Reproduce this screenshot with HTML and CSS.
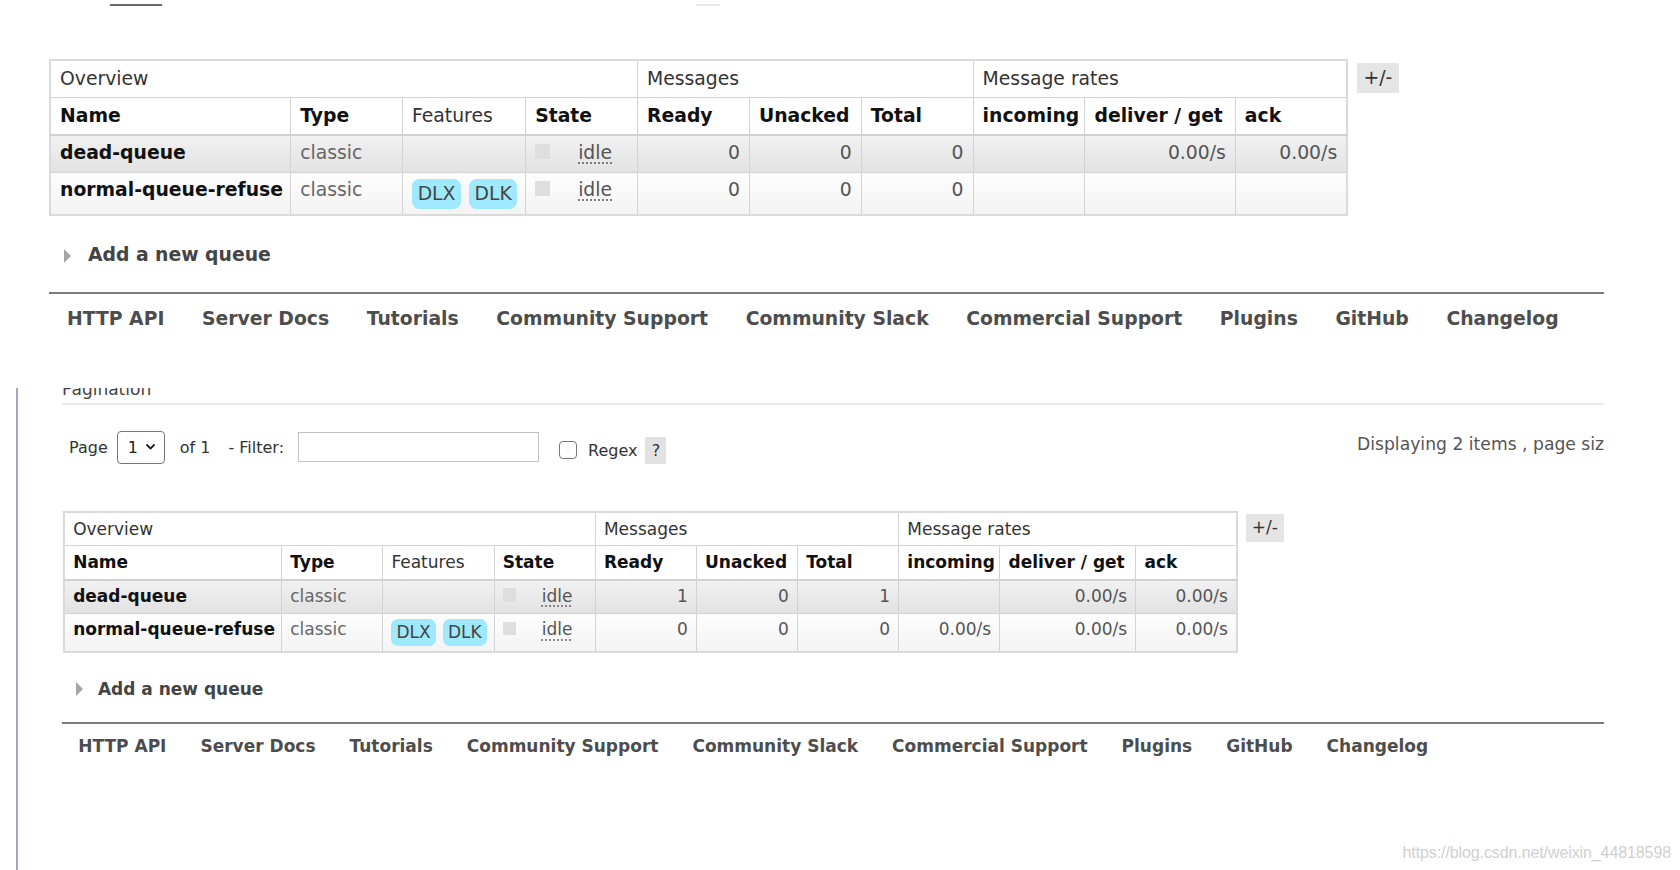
FILE: index.html
```html
<!DOCTYPE html>
<html lang="en">
<head>
  <meta charset="UTF-8">
  <title>RabbitMQ Management - Queues</title>
  <link rel="stylesheet" href="styles.css">
</head>
<body>
  <div class="tabs-edge">
    <span class="edge edge-dark"></span>
    <span class="edge edge-light"></span>
  </div>

  <!-- first capture -->
  <section class="page page-a">
    <div class="queues">
      <table class="list">
        <colgroup>
          <col class="c-name"><col class="c-std"><col class="c-feat"><col class="c-std">
          <col class="c-std"><col class="c-std"><col class="c-std">
          <col class="c-std"><col class="c-wide"><col class="c-std">
        </colgroup>
        <thead>
          <tr class="group">
            <th colspan="4">Overview</th>
            <th colspan="3">Messages</th>
            <th colspan="3">Message rates</th>
          </tr>
          <tr class="cols">
            <th>Name</th>
            <th>Type</th>
            <th class="plain">Features</th>
            <th>State</th>
            <th>Ready</th>
            <th>Unacked</th>
            <th>Total</th>
            <th>incoming</th>
            <th>deliver / get</th>
            <th>ack</th>
          </tr>
        </thead>
        <tbody>
          <tr class="alt1">
            <td class="name">dead-queue</td>
            <td>classic</td>
            <td></td>
            <td class="state"><span class="key"></span><span class="idle">idle</span></td>
            <td class="num">0</td>
            <td class="num">0</td>
            <td class="num">0</td>
            <td class="num"></td>
            <td class="num">0.00/s</td>
            <td class="num">0.00/s</td>
          </tr>
          <tr class="alt2 tall">
            <td class="name">normal-queue-refuse</td>
            <td>classic</td>
            <td><span class="tag">DLX</span> <span class="tag">DLK</span></td>
            <td class="state"><span class="key"></span><span class="idle">idle</span></td>
            <td class="num">0</td>
            <td class="num">0</td>
            <td class="num">0</td>
            <td class="num"></td>
            <td class="num"></td>
            <td class="num"></td>
          </tr>
        </tbody>
      </table>
      <span class="toggle">+/-</span>
    </div>

    <h2 class="add-queue"><span class="arrow"></span>Add a new queue</h2>

    <div class="footer">
      <a href="#">HTTP API</a>
      <a href="#">Server Docs</a>
      <a href="#">Tutorials</a>
      <a href="#">Community Support</a>
      <a href="#">Community Slack</a>
      <a href="#">Commercial Support</a>
      <a href="#">Plugins</a>
      <a href="#">GitHub</a>
      <a href="#">Changelog</a>
    </div>
  </section>

  <!-- second capture -->
  <section class="shot">
    <div class="page page-b">
      <h3 class="section-title">Pagination</h3>

      <div class="pager">
        <div class="pager-controls">
          <span class="pg-label">Page</span>
          <span class="select">1
            <svg width="9" height="6" viewBox="0 0 9 6"><path d="M1 1l3.5 3.5L8 1" fill="none" stroke="#222" stroke-width="1.8" stroke-linecap="round" stroke-linejoin="round"/></svg>
          </span>
          <span class="pg-of">of 1</span>
          <span class="pg-filter">- Filter:</span>
          <input type="text" class="filter">
          <input type="checkbox" class="check">
          <span class="pg-regex">Regex</span>
          <span class="help">?</span>
        </div>
        <span class="pager-info">Displaying 2 items , page size up to: 100</span>
      </div>

      <div class="queues">
        <table class="list">
          <colgroup>
            <col class="c-name"><col class="c-std"><col class="c-feat"><col class="c-std">
            <col class="c-std"><col class="c-std"><col class="c-std">
            <col class="c-std"><col class="c-wide"><col class="c-std">
          </colgroup>
          <thead>
            <tr class="group">
              <th colspan="4">Overview</th>
              <th colspan="3">Messages</th>
              <th colspan="3">Message rates</th>
            </tr>
            <tr class="cols">
              <th>Name</th>
              <th>Type</th>
              <th class="plain">Features</th>
              <th>State</th>
              <th>Ready</th>
              <th>Unacked</th>
              <th>Total</th>
              <th>incoming</th>
              <th>deliver / get</th>
              <th>ack</th>
            </tr>
          </thead>
          <tbody>
            <tr class="alt1">
              <td class="name">dead-queue</td>
              <td>classic</td>
              <td></td>
              <td class="state"><span class="key"></span><span class="idle">idle</span></td>
              <td class="num">1</td>
              <td class="num">0</td>
              <td class="num">1</td>
              <td class="num"></td>
              <td class="num">0.00/s</td>
              <td class="num">0.00/s</td>
            </tr>
            <tr class="alt2 tall">
              <td class="name">normal-queue-refuse</td>
              <td>classic</td>
              <td><span class="tag">DLX</span> <span class="tag">DLK</span></td>
              <td class="state"><span class="key"></span><span class="idle">idle</span></td>
              <td class="num">0</td>
              <td class="num">0</td>
              <td class="num">0</td>
              <td class="num">0.00/s</td>
              <td class="num">0.00/s</td>
              <td class="num">0.00/s</td>
            </tr>
          </tbody>
        </table>
        <span class="toggle">+/-</span>
      </div>

      <h2 class="add-queue"><span class="arrow"></span>Add a new queue</h2>

      <div class="footer">
        <a href="#">HTTP API</a>
        <a href="#">Server Docs</a>
        <a href="#">Tutorials</a>
        <a href="#">Community Support</a>
        <a href="#">Community Slack</a>
        <a href="#">Commercial Support</a>
        <a href="#">Plugins</a>
        <a href="#">GitHub</a>
        <a href="#">Changelog</a>
      </div>
    </div>
  </section>

  <div class="watermark">https://blog.csdn.net/weixin_44818598</div>
</body>
</html>
```

FILE: styles.css
```css
body {
  margin: 0;
  width: 1680px;
  height: 870px;
  overflow: hidden;
  position: relative;
  font-family: "DejaVu Sans", Verdana, sans-serif;
  color: #333;
  background-color: #fff;
}

/* leftover tab underline at the very top */
.tabs-edge {
  display: flex;
  height: 12px;
  padding-top: 4px;
  box-sizing: border-box;
}

.edge {
  height: 2px;
}

.edge-dark {
  margin-left: 110px;
  width: 52px;
  background-color: #6b6b6b;
}

.edge-light {
  margin-left: 534px;
  width: 24px;
  background-color: #e8e8e8;
}

/* both captures share the same page, only scaled */
.page {
  line-height: 1.2;
}

.page-a {
  font-size: 18.8px;
  margin: 47px 76px 0 49px;
}

.page-b {
  font-size: 17px;
}

.shot {
  margin: 58px 76px 0 16px;
  height: 500px;
  padding-left: 44px;
  border-left: 2px solid #a4a8c2;
  overflow: hidden;
}

/* queue table */
.queues {
  display: flex;
  align-items: flex-start;
  gap: 0.48em;
}

.page-b .queues {
  margin: 47px 0 0 1px;
}

.list {
  border-collapse: collapse;
  table-layout: fixed;
  width: 69em;
  border: 2px solid #dadada;
}

.c-name { width: 12.8em; }
.c-std { width: 5.95em; }
.c-feat { width: 6.55em; }
.c-wide { width: 8em; }

.page-b .list {
  width: 68.8em;
}

.list th,
.list td {
  border: 1px solid #d3d3d3;
  padding: 0 0.48em;
  text-align: left;
  white-space: nowrap;
  overflow: hidden;
}

.list thead tr {
  height: 2em;
}

.list thead th {
  vertical-align: middle;
  background-color: #fff;
}

.list .group th {
  font-weight: normal;
  color: #333;
}

.list .cols th {
  font-weight: bold;
  color: #111;
  border-bottom: 2px solid #d0d0d0;
}

.list .cols th.plain {
  font-weight: normal;
  color: #333;
}

.list tbody tr {
  height: 2em;
}

.list tbody tr.tall {
  height: 2.23em;
}

.list tbody td {
  vertical-align: top;
  padding-top: 0.3em;
  color: #666;
}

.list tr.alt1 td {
  background: linear-gradient(#f1f1f1, #e2e2e2);
}

.list tr.alt2 td {
  background: linear-gradient(#fdfdfd, #f3f3f3);
}

.list td.name {
  font-weight: bold;
  color: #111;
}

.list td.num {
  text-align: right;
  color: #555;
}

.key {
  display: inline-block;
  width: 0.8em;
  height: 0.8em;
  margin-right: 1.49em;
  background-color: #dedede;
}

.idle {
  color: #555;
  text-decoration: underline dotted #777;
  text-underline-offset: 0.22em;
}

.tag {
  display: inline-block;
  vertical-align: top;
  line-height: 1.6em;
  padding: 0 0.3em;
  margin-right: 0.1em;
  border-radius: 0.4em;
  background-color: #9ee9fb;
  color: #444;
}

.toggle {
  margin-top: 0.22em;
  width: 2.2em;
  height: 1.6em;
  line-height: 1.6em;
  text-align: center;
  background-color: #e5e5e5;
  color: #333;
}

/* collapsed section heading */
.add-queue {
  display: flex;
  align-items: center;
  margin: 1.53em 0 0 0.8em;
  font-size: 1em;
  font-weight: bold;
  line-height: 1.2;
  color: #444;
}

.add-queue .arrow {
  flex-shrink: 0;
  width: 0;
  height: 0;
  margin-right: 0.9em;
  border-left: 0.42em solid #a6a6a6;
  border-top: 0.42em solid transparent;
  border-bottom: 0.42em solid transparent;
}

.footer {
  display: flex;
  gap: 2em;
  margin-top: 1.33em;
  padding: 0.73em 0 0 0.96em;
  border-top: 2px solid #7c7c7c;
}

.footer a {
  color: #4d4d4d;
  font-weight: bold;
  text-decoration: none;
}

/* pagination block */
.section-title {
  margin: -9px 0 0 0;
  padding-bottom: 3px;
  font-size: 1em;
  font-weight: normal;
  line-height: 20.4px;
  color: #444;
  border-bottom: 2px solid #e8e8e8;
}

.pager {
  display: grid;
  grid-template-columns: 1295px auto;
  align-items: center;
  margin-top: 26px;
  height: 33px;
}

.pager-controls {
  display: flex;
  align-items: center;
  font-size: 16px;
  color: #333;
}

.pg-label {
  margin-left: 7px;
}

.select {
  display: flex;
  align-items: center;
  gap: 8px;
  margin-left: 9px;
  width: 48px;
  height: 33px;
  padding-left: 10px;
  box-sizing: border-box;
  border: 1px solid #767676;
  border-radius: 4px;
  color: #222;
}

.pg-of {
  margin-left: 15px;
}

.pg-filter {
  margin-left: 18px;
}

.filter {
  margin: 0 0 0 14px;
  width: 241px;
  height: 30px;
  box-sizing: border-box;
  border: 1px solid #c2c2c2;
  padding: 0;
}

.check {
  appearance: none;
  margin: 6px 0 0 20px;
  width: 18px;
  height: 18px;
  box-sizing: border-box;
  border: 1.5px solid #767676;
  border-radius: 4px;
  background-color: #fff;
}

.pg-regex {
  margin: 6px 0 0 11px;
}

.help {
  margin: 6px 0 0 8px;
  width: 21px;
  height: 27px;
  line-height: 27px;
  text-align: center;
  background-color: #e2e2e2;
}

.pager-info {
  white-space: nowrap;
  font-size: 17.2px;
  color: #555;
  margin-top: -6px;
}

.watermark {
  position: absolute;
  right: 9px;
  bottom: 8px;
  font-family: "Liberation Sans", Arial, sans-serif;
  font-size: 16px;
  letter-spacing: -0.1px;
  color: #cfcfcf;
}
```
